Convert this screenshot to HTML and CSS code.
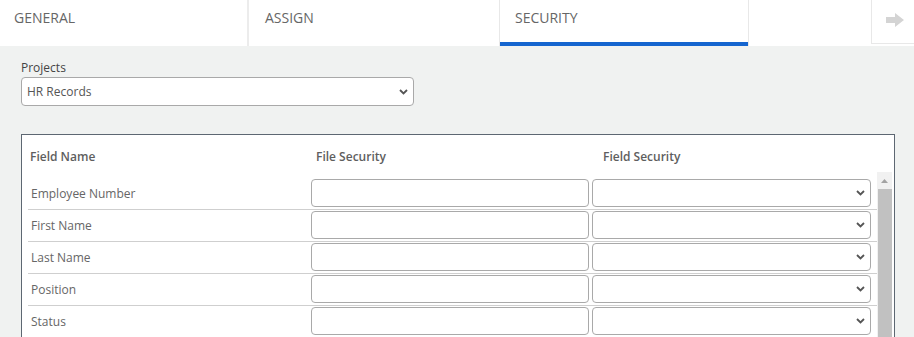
FILE: index.html
```html
<!DOCTYPE html>
<html lang="en">
<head>
<meta charset="utf-8">
<title>Security</title>
<link rel="stylesheet" href="styles.css">
</head>
<body>
<nav class="tabs">
  <div class="tab tab-first">GENERAL</div>
  <div class="tab tab-second">ASSIGN</div>
  <div class="tab tab-active">SECURITY</div>
  <div class="tab-spacer"></div>
  <div class="tab-next">
    <svg class="arrow-icon" width="18" height="14" viewBox="0 0 18 14"><polygon points="0,4 9,4 9,0 18,7 9,14 9,10 0,10" fill="#d4d4d4"/></svg>
  </div>
</nav>
<main class="content">
  <div class="field-label">Projects</div>
  <div class="select project-select">
    <span class="select-text">HR Records</span>
    <svg class="chevron" width="9" height="6" viewBox="0 0 9 6"><polyline points="1,1 4.5,4.5 8,1" fill="none" stroke="#555" stroke-width="1.8"/></svg>
  </div>
  <section class="grid-box">
    <div class="grid-head">
      <div class="head-cell head-name">Field Name</div>
      <div class="head-cell head-file">File Security</div>
      <div class="head-cell head-field">Field Security</div>
    </div>
    <div class="grid-body">
      <div class="rows">
        <div class="row">
          <div class="row-label">Employee Number</div>
          <div class="input"></div>
          <div class="select row-select"><svg class="chevron" width="9" height="6" viewBox="0 0 9 6"><polyline points="1,1 4.5,4.5 8,1" fill="none" stroke="#555" stroke-width="1.8"/></svg></div>
        </div>
        <div class="row">
          <div class="row-label">First Name</div>
          <div class="input"></div>
          <div class="select row-select"><svg class="chevron" width="9" height="6" viewBox="0 0 9 6"><polyline points="1,1 4.5,4.5 8,1" fill="none" stroke="#555" stroke-width="1.8"/></svg></div>
        </div>
        <div class="row">
          <div class="row-label">Last Name</div>
          <div class="input"></div>
          <div class="select row-select"><svg class="chevron" width="9" height="6" viewBox="0 0 9 6"><polyline points="1,1 4.5,4.5 8,1" fill="none" stroke="#555" stroke-width="1.8"/></svg></div>
        </div>
        <div class="row">
          <div class="row-label">Position</div>
          <div class="input"></div>
          <div class="select row-select"><svg class="chevron" width="9" height="6" viewBox="0 0 9 6"><polyline points="1,1 4.5,4.5 8,1" fill="none" stroke="#555" stroke-width="1.8"/></svg></div>
        </div>
        <div class="row">
          <div class="row-label">Status</div>
          <div class="input"></div>
          <div class="select row-select"><svg class="chevron" width="9" height="6" viewBox="0 0 9 6"><polyline points="1,1 4.5,4.5 8,1" fill="none" stroke="#555" stroke-width="1.8"/></svg></div>
        </div>
      </div>
      <div class="scrollbar">
        <div class="sb-up"><svg width="7" height="4" viewBox="0 0 7 4"><polygon points="0,4 3.5,0 7,4" fill="#a3a3a3"/></svg></div>
        <div class="sb-thumb"></div>
      </div>
    </div>
  </section>
</main>
</body>
</html>
```

FILE: styles.css
```css
html, body {
  margin: 0;
  padding: 0;
  height: 337px;
  overflow: hidden;
}

body {
  font-family: "Open Sans", "Liberation Sans", sans-serif;
  background: #f0f2f1;
  color: #555;
}

.tabs {
  display: flex;
  height: 46px;
  background: #fff;
}

.tab {
  box-sizing: border-box;
  height: 46px;
  padding: 8px 0 0 15px;
  font-size: 14px;
  line-height: 20px;
  color: #666;
}

.tab-first {
  width: 249px;
  padding-left: 14px;
  border-right: 2px solid #ececec;
}

.tab-second {
  width: 250px;
  padding-left: 16px;
}

.tab-active {
  width: 250px;
  border-left: 1px solid #e8e8e8;
  border-right: 1px solid #e8e8e8;
  box-shadow: inset 0 -4px 0 #1565cf;
}

.tab-spacer {
  flex: 1;
}

.tab-next {
  box-sizing: border-box;
  width: 43px;
  height: 44px;
  border-left: 1px solid #e8e8e8;
  border-bottom: 1px solid #e8e8e8;
  padding: 13px 0 0 14px;
}

.arrow-icon {
  display: block;
}

.content {
  padding: 14px 19px 0 21px;
}

.field-label {
  font-size: 12px;
  line-height: 16px;
  color: #444;
}

.select {
  box-sizing: border-box;
  display: flex;
  align-items: center;
  justify-content: space-between;
  background: #fff;
  border: 1px solid #a9a9a9;
  border-radius: 4px;
}

.project-select {
  margin-top: 1px;
  width: 393px;
  height: 29px;
  padding: 0 5px 0 5px;
}

.select-text {
  font-size: 12px;
  color: #555;
}

.chevron {
  display: block;
}

.grid-box {
  margin-top: 28px;
  background: #fff;
  border: 1px solid #5d6772;
  border-bottom: none;
}

.grid-head {
  display: grid;
  grid-template-columns: 283px 281px 285px;
  height: 37px;
  box-sizing: border-box;
  padding: 14px 0 0 6px;
  font-size: 12px;
  line-height: 16px;
  font-weight: 600;
  color: #5e5e5e;
}

.head-name { padding-left: 2px; }
.head-file { padding-left: 5px; }
.head-field { padding-left: 11px; }

.grid-body {
  display: flex;
}

.rows {
  width: 849px;
  margin-left: 6px;
  padding-top: 6px;
}

.row {
  display: grid;
  grid-template-columns: 280px 278px 279px;
  column-gap: 3px;
  align-items: center;
  padding: 1px 6px 2px 0;
  border-bottom: 1px solid #cfcfcf;
}

.row-label {
  padding: 1px 0 0 3px;
  font-size: 12px;
  line-height: 16px;
  color: #666;
}

.input {
  box-sizing: border-box;
  height: 28px;
  background: #fff;
  border: 1px solid #a9a9a9;
  border-radius: 4px;
}

.row-select {
  height: 28px;
  justify-content: flex-end;
  padding-right: 5px;
}

.scrollbar {
  width: 15px;
  margin-right: 2px;
  background: #f1f1f1;
  display: flex;
  flex-direction: column;
}

.sb-up {
  height: 17px;
  display: flex;
  align-items: center;
  justify-content: center;
}

.sb-up svg {
  display: block;
}

.sb-thumb {
  flex: 1;
  margin-left: 1px;
  background: #c1c1c1;
}
```
